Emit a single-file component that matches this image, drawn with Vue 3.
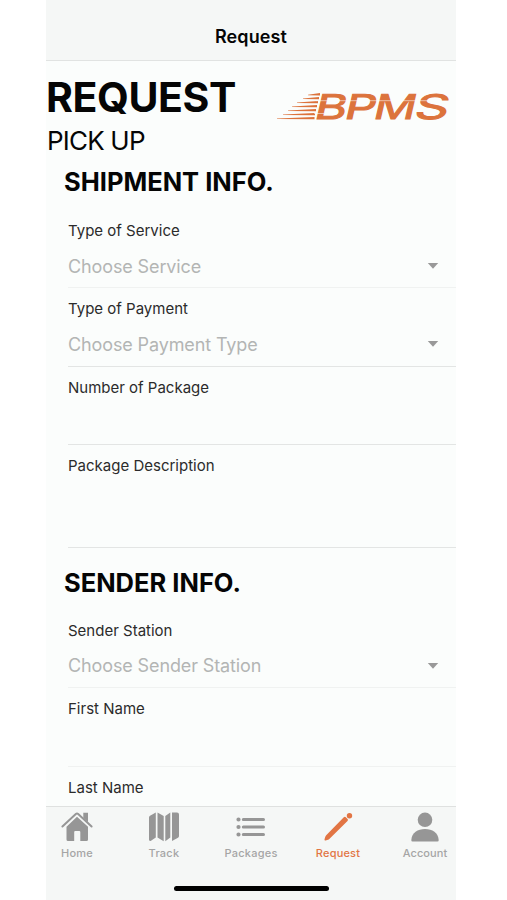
<script setup>
const sections = [
  {
    title: 'SHIPMENT INFO.',
    fields: [
      { label: 'Type of Service', placeholder: 'Choose Service', faint: true },
      { label: 'Type of Payment', placeholder: 'Choose Payment Type' },
      { label: 'Number of Package' },
      { label: 'Package Description', tall: true },
    ],
  },
  {
    title: 'SENDER INFO.',
    fields: [
      { label: 'Sender Station', placeholder: 'Choose Sender Station', faint: true },
      { label: 'First Name', faint: true },
      { label: 'Last Name' },
    ],
  },
]
// start x, y and end x of each streak
const speedLines = [
  [308, 94.2, 320], [303, 98, 319], [297, 102, 318], [292, 106, 317],
  [288, 110, 316], [283, 114, 315], [277, 118, 314.5],
]
const letters = [
  { c: 'B', x: 0, w: 32 },
  { c: 'P', x: 30, w: 31 },
  { c: 'M', x: 59, w: 42 },
  { c: 'S', x: 100, w: 34 },
]
const tabs = ['Home', 'Track', 'Packages', 'Request', 'Account']
</script>

<template>
  <div class="phone">
    <header class="navbar">Request</header>
    <main class="content">
      <div class="hero">
        <div>
          <h1>REQUEST</h1>
          <p class="sub">PICK UP</p>
        </div>
        <svg class="logo" width="176" height="34" viewBox="275 89 176 34">
          <g fill="#dc733c">
            <path
              v-for="[x, y, end] in speedLines"
              :key="y"
              :d="`M${x} ${y + 0.5} L${end} ${y - 1.1} V${y + 1.3} L${x} ${y + 1} Z`"
            />
            <g transform="translate(313 118.600) skewX(-13)">
              <text
                v-for="l in letters"
                :key="l.c"
                :x="l.x"
                y="0"
                :textLength="l.w"
                lengthAdjust="spacingAndGlyphs"
              >{{ l.c }}</text>
            </g>
          </g>
          <path d="M316 100.700H449M314 113.500H324" stroke="#fbfdfc" stroke-width=".8" opacity=".7" />
        </svg>
      </div>
      <section v-for="s in sections" :key="s.title">
        <h2>{{ s.title }}</h2>
        <div v-for="f in s.fields" :key="f.label" class="field" :class="{ tall: f.tall, faint: f.faint }">
          <label>{{ f.label }}</label>
          <div v-if="f.placeholder" class="select">
            <span>{{ f.placeholder }}</span>
            <svg width="12" height="6" viewBox="0 0 12 6"><path d="M.8 0h10.400L6 5.800z" fill="#999" /></svg>
          </div>
        </div>
      </section>
    </main>
    <footer class="tabbar">
      <nav>
        <div v-for="t in tabs" :key="t" class="tab" :class="[t.toLowerCase(), { active: t === 'Request' }]">
          <svg width="34" height="32" viewBox="0 0 34 32" fill="currentColor">
            <template v-if="t === 'Home'">
              <path d="M17 5.800 28 15.800V28.500Q28 30 26.500 30H20.300V21Q20.300 20 19.300 20H15.200Q14.200 20 14.200 21V30H8Q6.500 30 6.500 28.500V15.800Z" />
              <path d="M2.400 15.500 15.800 3Q17 2 18.200 3L31.600 15.500" fill="none" stroke="currentColor" stroke-width="2" stroke-linecap="round" />
              <path d="M23.300 1.800h4.700v9.500l-4.700-4.300z" />
            </template>
            <template v-else-if="t === 'Track'">
              <path d="M2 6.500Q2 5.300 3 4.700L8.800 1.600v24.800L4 29.800Q2 30.600 2 28.600zM10.500 1.500l6.200 3.500v25.200l-6.200-3.800zM18.300 5l5-3.400v24.800l-5 3.800zM25 1.500 30 1.400Q32 1.500 32 3.400v21.600Q32 26.200 31 26.800L25 30z" />
            </template>
            <template v-else-if="t === 'Packages'">
              <g stroke="currentColor" stroke-linecap="round">
                <path d="M9.300 8.500h20.200M9.300 16h20.200M9.300 23.500h20.200" stroke-width="3" />
                <path d="M4.500 8.500h.01M4.500 16h.01M4.500 23.500h.01" stroke-width="4.200" />
              </g>
            </template>
            <template v-else-if="t === 'Request'">
              <path d="M22.800 6.200Q23.800 5.300 24.800 6.200L26.600 8Q27.400 9 26.500 10L8.300 27.900Q7.800 28.400 7 28.700L4.600 29.500Q3.200 29.700 3.500 28.300L4.300 25.800Q4.600 24.900 5.200 24.300Z" />
              <circle cx="28.500" cy="4.700" r="2.700" />
            </template>
            <template v-else>
              <circle cx="17" cy="8.800" r="7.300" />
              <path d="M4.600 30.500Q3.200 30.500 3.300 29C4 21.500 9.500 18 17 18s13 3.500 13.700 11Q30.800 30.500 29.400 30.500Z" />
            </template>
          </svg>
          <span>{{ t }}</span>
        </div>
      </nav>
      <div class="home-indicator"></div>
    </footer>
  </div>
</template>

<style>
body { background: #fff; }
</style>

<style scoped>
* { box-sizing: border-box; }
.phone {
  width: 410px;
  height: 900px;
  margin-left: 46px;
  display: flex;
  flex-direction: column;
  overflow: hidden;
  background: #fbfdfc;
  color: #050505;
  font-family: Inter, "Liberation Sans", sans-serif;
}
.navbar {
  flex: none;
  height: 61px;
  padding-top: 24px;
  border-bottom: 1px solid #e1e3e2;
  background: #f5f7f6;
  text-align: center;
  font-size: 18px;
  line-height: 26px;
  font-weight: 600;
  letter-spacing: .1px;
}
.content { flex: 1; min-height: 0; overflow: hidden; }
.hero { height: 99px; display: flex; justify-content: space-between; padding-right: 5px; }
h1, h2, p { margin: 0; white-space: nowrap; }
h1 { padding-top: 12px; font-size: 41px; line-height: 48px; font-weight: 700; letter-spacing: -.4px; }
.sub { padding: 1px 0 0 1px; font-size: 26px; line-height: 38px; letter-spacing: -.8px; }
.logo { margin-top: 28px; overflow: visible; }
.logo text { font: 400 34px Inter, "Liberation Sans", sans-serif; stroke: #dc733c; stroke-width: 1px; }
h2 { height: 50px; padding: 4px 0 0 18px; font-size: 25.500px; line-height: 36px; font-weight: 700; }
section + section h2 { height: 62px; padding-top: 17px; }
.field { height: 78.400px; margin-left: 22px; padding-top: 10px; border-bottom: 1px solid #e3e5e4; }
.field.tall { height: 102.800px; }
.field.faint { border-color: #f0f2f1; }
label { display: block; font-size: 15px; line-height: 22px; color: #2b2b2b; }
.select { display: flex; align-items: center; justify-content: space-between; height: 28px; margin-top: 10px; padding-right: 17px; font-size: 18px; letter-spacing: -.12px; color: #b3b5b4; }
.tabbar { flex: none; height: 94px; border-top: 1px solid #dfe1e0; background: #f5f7f6; }
nav { display: flex; height: 79px; margin: 0 -12.500px; }
.tab { flex: 1; display: flex; flex-direction: column; align-items: center; padding-top: 4px; color: #969696; font-size: 11px; line-height: 16px; font-weight: 500; letter-spacing: .25px; }
.tab span { margin-top: 2px; color: #a5a5a5; }
.tab.account span { letter-spacing: .1px; }
.tab.active, .tab.active span { color: #e27544; }
.tab.active span { letter-spacing: .2px; }
.home-indicator { width: 155px; height: 5px; margin: 0 auto; border-radius: 3px; background: #000; }
</style>
